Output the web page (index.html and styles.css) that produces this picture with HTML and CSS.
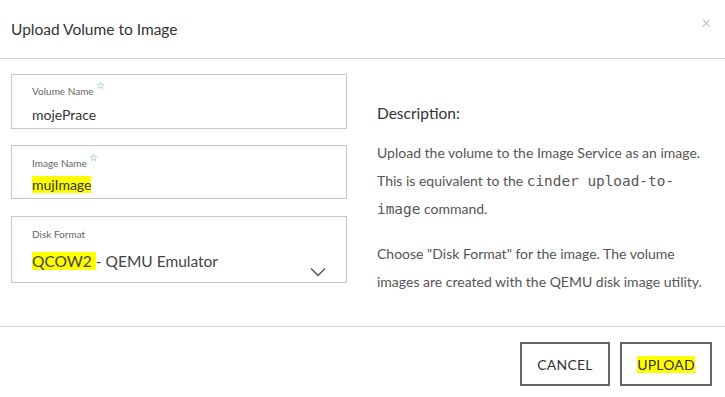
FILE: index.html
```html
<!DOCTYPE html>
<html>
<head>
<meta charset="utf-8">
<link rel="stylesheet" href="styles.css">
</head>
<body>
<div class="modal">
  <div class="header">
    <h1 class="title">Upload Volume to Image</h1>
    <span class="close">&times;</span>
  </div>
  <div class="body">
    <div class="form">
      <div class="field f1">
        <div class="label">Volume Name <span class="star">&#9734;</span></div>
        <div class="value">mojePrace</div>
      </div>
      <div class="field f2">
        <div class="label">Image Name <span class="star">&#9734;</span></div>
        <div class="value"><span class="hl">mujImage</span></div>
      </div>
      <div class="field f3">
        <div class="label">Disk Format</div>
        <div class="value big"><span class="hl">QCOW2 </span>- QEMU Emulator</div>
        <svg class="chev" width="16" height="10" viewBox="0 0 16 10"><path d="M1 1.5 L8 8.5 L15 1.5" fill="none" stroke="#555" stroke-width="1.4"/></svg>
      </div>
    </div>
    <div class="desc">
      <h2 class="dtitle">Description:</h2>
      <p>Upload the volume to the Image Service as an image. This is equivalent to the <code>cinder upload-to-image</code> command.</p>
      <p>Choose "Disk Format" for the image. The volume images are created with the QEMU disk image utility.</p>
    </div>
  </div>
  <div class="footer">
    <button class="btn">CANCEL</button>
    <button class="btn"><span class="hl">UPLOAD</span></button>
  </div>
</div>
</body>
</html>
```
FILE: styles.css
```css
* { box-sizing: border-box; }
html, body { margin: 0; padding: 0; background: #fff; }
body { font-family: Lato, "Open Sans", sans-serif; color: #333; width: 725px; height: 397px; overflow: hidden; }
.modal { width: 725px; }
.header { height: 59px; border-bottom: 1px solid #cfcfcf; display: flex; align-items: center; justify-content: space-between; padding: 0 12px 0 11px; }
.title { margin: 0; font-size: 15.5px; font-weight: 400; color: #333; padding-bottom: 1px; }
.close { color: #c8c8c8; font-size: 17px; margin-right: 2px; margin-top: -14px; }
.body { display: flex; padding: 15px 0 0 11px; height: 268px; border-bottom: 1px solid #cfcfcf; }
.form { width: 336px; display: flex; flex-direction: column; gap: 16px; }
.field { border: 1px solid #c8c8c8; padding: 0 20px; position: relative; }
.f1 { height: 55px; padding-top: 9px; }
.f1 .value { margin-top: 8px; }
.f2 { height: 54px; padding-top: 10px; }
.f3 { height: 67px; padding-top: 10px; margin-top: 1px; }
.label { font-size: 10px; color: #666; line-height: 14px; }
.star { color: #1f9e8a; font-size: 10px; position: relative; top: -6px; }
.value { font-size: 14px; color: #333; margin-top: 6px; line-height: 18px; }
.value.big { font-size: 15.5px; margin-top: 11px; color: #444; }
.hl { background: #ffff00; }
.chev { position: absolute; right: 20px; bottom: 5px; }
.desc { margin-left: 30px; width: 335px; }
.dtitle { margin: 0; font-size: 15.5px; font-weight: 400; color: #333; padding-top: 30px; line-height: 18px; }
.desc p { margin: 17px 0 0; font-size: 14px; color: #555; line-height: 28px; }
.desc p + p { margin-top: 17px; }
code { font-family: "DejaVu Sans Mono", monospace; font-size: 14.4px; line-height: 1; color: #555; }
.footer { display: flex; justify-content: flex-end; gap: 10px; padding: 15px 13px 0 0; }
.btn { height: 44px; border: 2px solid #666; background: #fff; font-family: Lato, sans-serif; font-size: 14px; color: #333; padding: 0; letter-spacing: 0.2px; }
.btn:first-child { width: 90px; }
.btn:last-child { width: 92px; }
```
